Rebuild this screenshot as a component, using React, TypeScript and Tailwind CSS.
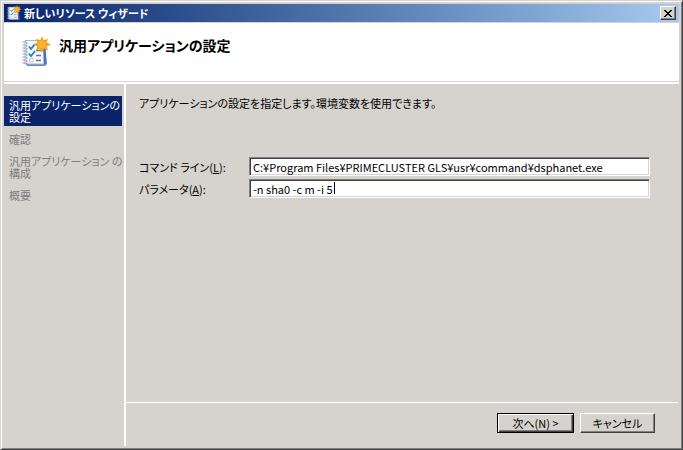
import { useState } from "react";

const steps = ["汎用アプリケーションの\n設定", "確認", "汎用アプリケーション の\n構成", "概要"];

function ChecklistIcon({ className }: { className: string }) {
    return (
        <svg viewBox="0 0 30 32" className={className} aria-hidden="true">
            {/* Notebook */}
            <path d="M5 5 L24 4 L26 28 L24 30 L6 30 Z" fill="#6c86c2" />
            <path d="M4 4.5 L22 4.5 L23 28 L4 28 Z" fill="#f7f9fd" stroke="#a9b6d6" strokeWidth="1" />
            <path d="M23 8 L24 28" stroke="#4a66ac" strokeWidth="1.5" />
            {/* Spiral binding */}
            {[6, 9, 12, 15, 18, 21, 24, 27].map((y) => (
                <g key={y}>
                    <path d={`M1.5 ${y} h4`} stroke="#a4abba" strokeWidth="1.2" />
                    <path d={`M5 ${y + 1} h1.5`} stroke="#6d7690" strokeWidth="1" />
                </g>
            ))}
            {/* Check marks */}
            <path d="M8 10.5 L10 13 L14 8 M8 17.5 L10 20 L14 15" fill="none" stroke="#2386cc" strokeWidth="2" />
            <path d="M8.5 22.5 h3.5 v3.5 h-3.5 Z" fill="#fff" stroke="#cfc3d0" strokeWidth="1" />
            <path d="M15 14.5 h5 M15 19.5 h5 M15 24.5 h5" stroke="#6b7698" strokeWidth="1.3" />
            {/* Star */}
            <path
                d="M21 0 L22.8 4.5 L27 2.5 L25.7 6.5 L30 8.5 L25.7 10.5 L27 14.5 L22.8 12.8 L21 17 L19 12.8 L15 14.5 L16.3 10.5 L12.5 8.5 L16.3 6.5 L15 2.5 L19.2 4.5 Z"
                fill="#f5a11c"
            />
            <circle cx="21" cy="8.5" r="4" fill="#f9b52c" />
        </svg>
    );
}

function TitleBar() {
    return (
        <div className="flex h-[18px] items-center bg-linear-to-r from-[#0a246a] to-[#a6caf0] pl-[2px] pr-[3px] text-white">
            <ChecklistIcon className="h-4 w-4" />
            <span className="flex-1 pl-[2px] font-bold">新しいリソース ウィザード</span>
            <button
                type="button"
                aria-label="閉じる"
                className="flex h-[14px] w-4 items-center justify-center border border-b-[#404040] border-l-white border-r-[#404040] border-t-white bg-[#d6d2cd] shadow-[inset_-1px_-1px_0_#808080]"
            >
                <svg viewBox="0 0 8 7" className="h-[7px] w-2" shapeRendering="crispEdges">
                    <path
                        d="M0 0h2v1h1v1h2v-1h1v-1h2v1h-1v1h-1v1h-1v1h1v1h1v1h1v1h-2v-1h-1v-1h-2v1h-1v1h-2v-1h1v-1h1v-1h1v-1h-1v-1h-1v-1h-1z"
                        fill="#000"
                    />
                </svg>
            </button>
        </div>
    );
}

type FieldProps = {
    id: string;
    label: string;
    accessKey: string;
    value: string;
    onChange: (value: string) => void;
    caret?: boolean;
};

function Field({ id, label, accessKey, value, onChange, caret }: FieldProps) {
    return (
        <div className="flex items-center">
            <label htmlFor={id} className="w-[110px] shrink-0">
                {label}(<u>{accessKey}</u>):
            </label>
            <div className="relative flex-1">
                <input
                    id={id}
                    type="text"
                    value={value}
                    onChange={(e) => onChange(e.target.value)}
                    className="block h-[19px] w-full border border-b-white border-l-[#808080] border-r-white border-t-[#808080] bg-white px-[3px] leading-4 shadow-[inset_1px_1px_0_#404040,inset_-1px_-1px_0_#d6d2cd] outline-none"
                />
                {caret && <span className="absolute left-[85px] top-[3px] h-3 w-px bg-black" />}
            </div>
        </div>
    );
}

export default function App() {
    const [commandLine, setCommandLine] = useState("C:¥Program Files¥PRIMECLUSTER GLS¥usr¥command¥dsphanet.exe");
    const [parameters, setParameters] = useState("-n sha0 -c m -i 5");

    return (
        <div className="flex min-h-screen flex-col border border-b-[#404040] border-l-[#d6d2cd] border-r-[#404040] border-t-[#d6d2cd] bg-[#d6d2cd] p-[3px] font-['Noto_Sans_CJK_JP',sans-serif] text-[11px] leading-4 text-black shadow-[inset_1px_1px_0_#fff,inset_-1px_-1px_0_#808080] [font-feature-settings:'palt']">
            <TitleBar />

            {/* Page heading */}
            <header className="mt-px flex h-[58px] items-center bg-white pl-[17px]">
                <ChecklistIcon className="h-8 w-[30px]" />
                <h1 className="pb-[14px] pl-2 text-[14px] font-bold leading-5">汎用アプリケーションの設定</h1>
            </header>
            <div className="mt-px h-[2px] bg-white" />

            <div className="flex flex-1">
                {/* Steps */}
                <nav className="w-[122px] shrink-0 border-r-2 border-white pr-[2px] pt-3">
                    <ol className="flex flex-col gap-1 whitespace-pre leading-3">
                        {steps.map((step, i) => (
                            <li
                                key={step}
                                aria-current={i === 0 ? "step" : undefined}
                                className={i === 0 ? "bg-[#0a246a] py-[3px] pl-[5px] text-white" : "py-[3px] pl-[5px] text-[#808080]"}
                            >
                                {step}
                            </li>
                        ))}
                    </ol>
                </nav>

                <main className="flex flex-1 flex-col">
                    <div className="flex-1 pl-[13px] pr-[29px] pt-[11px]">
                        <p>アプリケーションの設定を指定します。環境変数を使用できます。</p>
                        <div className="mt-[46px] flex flex-col gap-[3px]">
                            <Field id="command-line" label="コマンド ライン" accessKey="L" value={commandLine} onChange={setCommandLine} />
                            <Field id="parameters" label="パラメータ" accessKey="A" value={parameters} onChange={setParameters} caret />
                        </div>
                    </div>

                    <footer className="mr-px flex justify-end gap-[6px] border-t border-white pb-[13px] pr-[23px] pt-[10px]">
                        <button
                            type="button"
                            className="h-5 w-[77px] border border-black leading-4 shadow-[inset_1px_1px_0_#fff,inset_-1px_-1px_0_#404040,inset_-2px_-2px_0_#808080]"
                        >
                            次へ(N) &gt;
                        </button>
                        <button
                            type="button"
                            className="h-5 w-[75px] border border-b-[#404040] border-l-white border-r-[#404040] border-t-white leading-4 shadow-[inset_-1px_-1px_0_#808080]"
                        >
                            キャンセル
                        </button>
                    </footer>
                </main>
            </div>
        </div>
    );
}
